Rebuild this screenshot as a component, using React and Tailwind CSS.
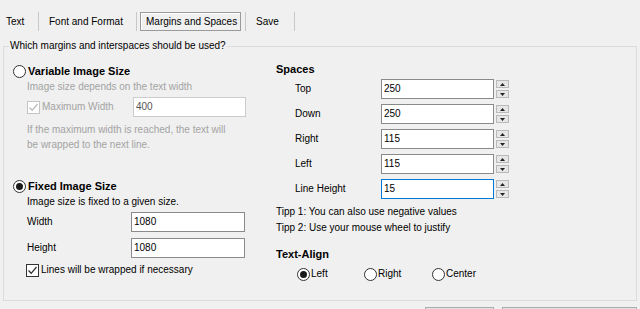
import React from 'react';

function Radio({ checked }) {
    return (
        <span className="w-[13px] h-[13px] rounded-full border border-[#333333] bg-white flex items-center justify-center shrink-0">
            {checked && <span className="w-[7px] h-[7px] rounded-full bg-[#1a1a1a]" />}
        </span>
    );
}

function Checkbox({ checked, disabled }) {
    const stroke = disabled ? '#bcbcbc' : '#333333';
    return (
        <span className={`w-[13px] h-[13px] border bg-white flex items-center justify-center shrink-0 ${disabled ? 'border-[#c4c4c4]' : 'border-[#333333]'}`}>
            {checked && (
                <svg width="11" height="11" viewBox="0 0 11 11">
                    <path d="M1.5 5.5 L4.2 8.3 L9.5 2" fill="none" stroke={stroke} strokeWidth="1.3" />
                </svg>
            )}
        </span>
    );
}

function Spin() {
    return (
        <div className="ml-[2px] flex flex-col gap-[2px]">
            <span className="w-[13px] h-[8px] border border-[#b9b9b9] bg-[#e6e6e6] flex items-center justify-center">
                <svg width="5" height="3" viewBox="0 0 5 3"><path d="M0 3 L2.5 0 L5 3Z" fill="#222" /></svg>
            </span>
            <span className="w-[13px] h-[8px] border border-[#b9b9b9] bg-[#e6e6e6] flex items-center justify-center">
                <svg width="5" height="3" viewBox="0 0 5 3"><path d="M0 0 L5 0 L2.5 3Z" fill="#222" /></svg>
            </span>
        </div>
    );
}

function Field({ value, width = 'w-[113px]', focus, disabled }) {
    let border = 'border-[#8a8a8a]';
    if (focus) border = 'border-[#0078d7]';
    if (disabled) border = 'border-[#cccccc]';
    return (
        <div className={`${width} h-[20px] border ${border} bg-white flex items-center pl-[2px] ${disabled ? 'text-[#555555]' : 'text-black'}`}>
            {value}
        </div>
    );
}

function SpaceRow({ label, value, focus }) {
    return (
        <div className="h-[20px] flex items-center">
            <span className="w-[105px] pl-[19px]">{label}</span>
            <Field value={value} focus={focus} />
            <Spin />
        </div>
    );
}

function AlignOption({ label, checked, width }) {
    return (
        <div className={`${width} flex items-center gap-[1px]`}>
            <Radio checked={checked} />
            <span>{label}</span>
        </div>
    );
}

export default function App() {
    const spaces = [
        { label: 'Top', value: '250' },
        { label: 'Down', value: '250' },
        { label: 'Right', value: '115' },
        { label: 'Left', value: '115' },
        { label: 'Line Height', value: '15', focus: true },
    ];

    return (
        <div className="w-[640px] h-[309px] overflow-hidden bg-[#f0f0f0] text-black text-[10px] leading-[16px] font-['Liberation_Sans',Arial,sans-serif]">
            {/* tabs */}
            <div className="mt-[12px] h-[19px] flex items-center">
                <span className="w-[38px] pl-[6px]">Text</span>
                <span className="w-px h-[19px] bg-[#c8c8c8]" />
                <span className="w-[97px] pl-[10px]">Font and Format</span>
                <span className="w-px h-[19px] bg-[#c8c8c8]" />
                <span className="ml-[3px] w-[101px] h-[19px] border border-[#9a9a9a] shadow-[inset_1px_1px_0_#ffffff] flex items-center pl-[5px]">
                    Margins and Spaces
                </span>
                <span className="ml-[4px] w-px h-[19px] bg-[#c8c8c8]" />
                <span className="w-[48px] pl-[10px]">Save</span>
                <span className="w-px h-[19px] bg-[#c8c8c8]" />
            </div>

            <fieldset className="mx-[3px] mt-[9px] h-[261px] border border-[#dcdcdc]">
                <legend className="ml-[5px] px-[1px] leading-[12px]">Which margins and interspaces should be used?</legend>
                <div className="flex pl-[9px]">
                    {/* left column */}
                    <div className="w-[263px] flex flex-col">
                        <div className="mt-[11px] h-[16px] flex items-center gap-[2px]">
                            <Radio />
                            <span className="font-bold text-[11px]">Variable Image Size</span>
                        </div>
                        <div className="h-[16px] pl-[14px] flex items-center text-[#a3a3a3]">
                            Image size depends on the text width
                        </div>
                        <div className="mt-[2px] h-[20px] pl-[14px] flex items-center">
                            <div className="w-[106px] flex items-center gap-[2px]">
                                <Checkbox checked disabled />
                                <span className="text-[#a3a3a3]">Maximum Width</span>
                            </div>
                            <Field value="400" disabled />
                        </div>
                        <p className="mt-[5px] pl-[14px] w-[219px] leading-[15px] text-[#a3a3a3]">
                            If the maximum width is reached, the text will be wrapped to the next line.
                        </p>

                        <div className="mt-[26px] h-[16px] flex items-center gap-[2px]">
                            <Radio checked />
                            <span className="font-bold text-[11px]">Fixed Image Size</span>
                        </div>
                        <div className="h-[16px] pl-[14px] flex items-center">
                            Image size is fixed to a given size.
                        </div>
                        <div className="mt-[2px] h-[20px] pl-[14px] flex items-center">
                            <span className="w-[104px]">Width</span>
                            <Field value="1080" width="w-[114px]" />
                        </div>
                        <div className="mt-[6px] h-[20px] pl-[14px] flex items-center">
                            <span className="w-[104px]">Height</span>
                            <Field value="1080" width="w-[114px]" />
                        </div>
                        <div className="mt-[4px] h-[16px] pl-[13px] flex items-center gap-[2px]">
                            <Checkbox checked />
                            <span>Lines will be wrapped if necessary</span>
                        </div>
                    </div>

                    {/* right column */}
                    <div className="flex-1 flex flex-col">
                        <div className="mt-[9px] h-[16px] font-bold text-[11px] flex items-center">Spaces</div>
                        <div className="mt-[2px] flex flex-col gap-[5px]">
                            {spaces.map((s) => (
                                <SpaceRow key={s.label} label={s.label} value={s.value} focus={s.focus} />
                            ))}
                        </div>
                        <div className="mt-[5px] h-[16px] flex items-center">Tipp 1: You can also use negative values</div>
                        <div className="h-[16px] flex items-center">Tipp 2: Use your mouse wheel to justify</div>
                        <div className="mt-[10px] h-[16px] font-bold text-[11px] flex items-center">Text-Align</div>
                        <div className="mt-[4px] h-[16px] pl-[21px] flex items-center">
                            <AlignOption label="Left" checked width="w-[67px]" />
                            <AlignOption label="Right" width="w-[68px]" />
                            <AlignOption label="Center" width="w-[60px]" />
                        </div>
                    </div>
                </div>
            </fieldset>

            <div className="mt-[6px] flex justify-end gap-[8px] pr-[3px]">
                <button type="button" className="w-[69px] h-[23px] border border-[#adadad] bg-[#e1e1e1]" />
                <button type="button" className="w-[135px] h-[23px] border border-[#adadad] bg-[#e1e1e1]" />
            </div>
        </div>
    );
}
